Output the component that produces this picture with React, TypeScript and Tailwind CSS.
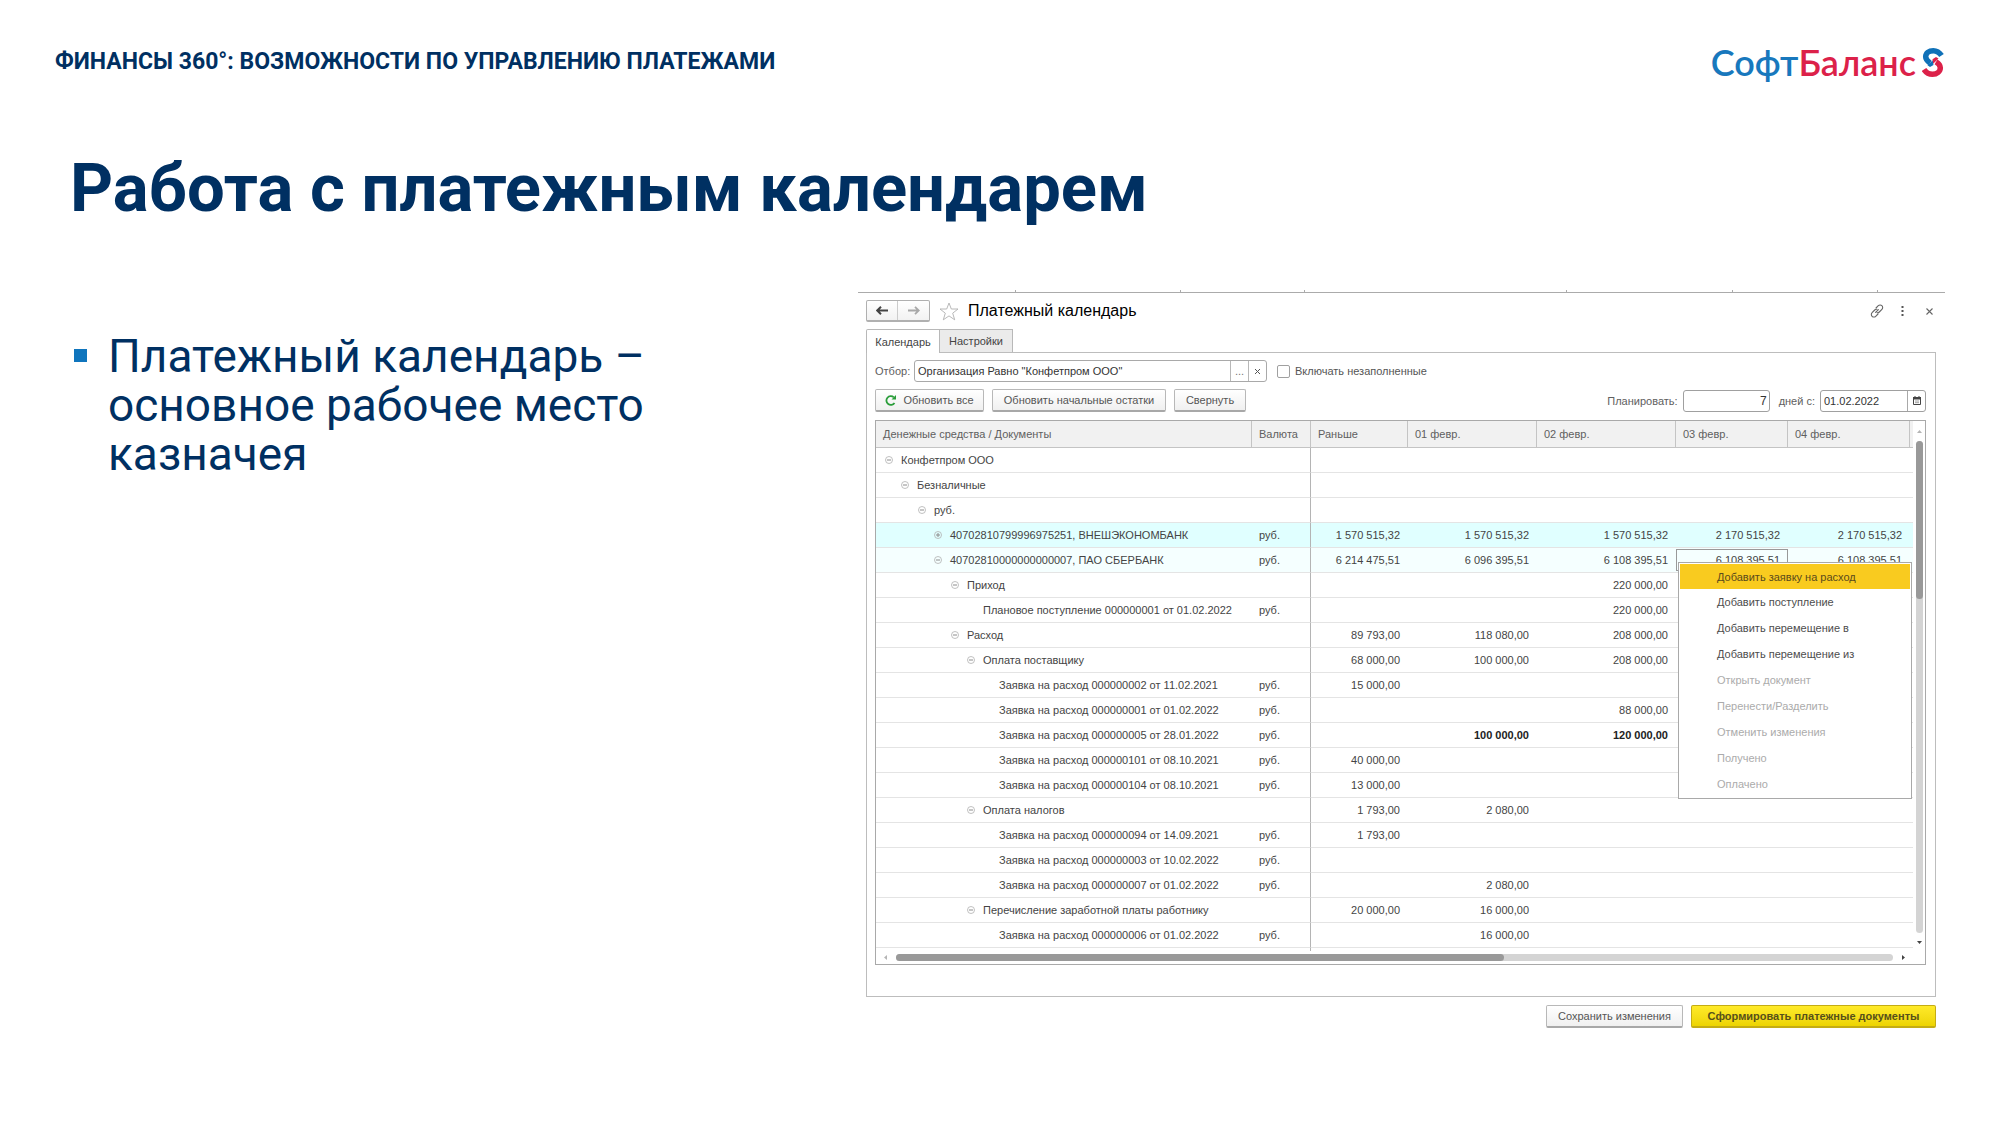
import React from "react";

type Row = {
  level: number;
  label: string;
  icon?: "minus" | "plus";
  currency?: boolean;
  values?: string[];
  tint?: "strong" | "light";
  bold?: boolean;
  menuAt?: number;
};

const rows: Row[] = [
  { level: 0, label: "Конфетпром ООО", icon: "minus" },
  { level: 1, label: "Безналичные", icon: "minus" },
  { level: 2, label: "руб.", icon: "minus" },
  {
    level: 3,
    label: "40702810799996975251, ВНЕШЭКОНОМБАНК",
    icon: "plus",
    currency: true,
    tint: "strong",
    values: ["1 570 515,32", "1 570 515,32", "1 570 515,32", "2 170 515,32", "2 170 515,32"],
  },
  {
    level: 3,
    label: "40702810000000000007, ПАО СБЕРБАНК",
    icon: "minus",
    currency: true,
    tint: "light",
    values: ["6 214 475,51", "6 096 395,51", "6 108 395,51", "6 108 395,51", "6 108 395,51"],
    menuAt: 3,
  },
  { level: 4, label: "Приход", icon: "minus", values: ["", "", "220 000,00"] },
  { level: 5, label: "Плановое поступление 000000001 от 01.02.2022", currency: true, values: ["", "", "220 000,00"] },
  { level: 4, label: "Расход", icon: "minus", values: ["89 793,00", "118 080,00", "208 000,00"] },
  { level: 5, label: "Оплата поставщику", icon: "minus", values: ["68 000,00", "100 000,00", "208 000,00"] },
  { level: 6, label: "Заявка на расход 000000002 от 11.02.2021", currency: true, values: ["15 000,00"] },
  { level: 6, label: "Заявка на расход 000000001 от 01.02.2022", currency: true, values: ["", "", "88 000,00"] },
  { level: 6, label: "Заявка на расход 000000005 от 28.01.2022", currency: true, values: ["", "100 000,00", "120 000,00"], bold: true },
  { level: 6, label: "Заявка на расход 000000101 от 08.10.2021", currency: true, values: ["40 000,00"] },
  { level: 6, label: "Заявка на расход 000000104 от 08.10.2021", currency: true, values: ["13 000,00"] },
  { level: 5, label: "Оплата налогов", icon: "minus", values: ["1 793,00", "2 080,00"] },
  { level: 6, label: "Заявка на расход 000000094 от 14.09.2021", currency: true, values: ["1 793,00"] },
  { level: 6, label: "Заявка на расход 000000003 от 10.02.2022", currency: true },
  { level: 6, label: "Заявка на расход 000000007 от 01.02.2022", currency: true, values: ["", "2 080,00"] },
  { level: 5, label: "Перечисление заработной платы работнику", icon: "minus", values: ["20 000,00", "16 000,00"] },
  { level: 6, label: "Заявка на расход 000000006 от 01.02.2022", currency: true, values: ["", "16 000,00"] },
];

const menuItems = [
  { label: "Добавить заявку на расход", enabled: true },
  { label: "Добавить поступление", enabled: true },
  { label: "Добавить перемещение в", enabled: true },
  { label: "Добавить перемещение из", enabled: true },
  { label: "Открыть документ", enabled: false },
  { label: "Перенести/Разделить", enabled: false },
  { label: "Отменить изменения", enabled: false },
  { label: "Получено", enabled: false },
  { label: "Оплачено", enabled: false },
];

const columns = ["Раньше", "01 февр.", "02 февр.", "03 февр.", "04 февр."];

const buttonClass =
  "flex h-[23px] items-center justify-center rounded-[2px] border border-[#b8b8b8] border-b-2 border-b-[#a8a8a8] bg-linear-to-b from-white to-[#f0f0f0] whitespace-nowrap text-[#555]";

function Toggle({ kind }: { kind: "minus" | "plus" }) {
  return (
    <svg className="size-2 shrink-0" viewBox="0 0 8 8" fill="none" stroke="#8c8c8c" aria-hidden="true">
      <circle cx="4" cy="4" r="3.5" stroke="#b0b0b0" strokeWidth="0.8" />
      <path d={kind === "minus" ? "M2 4h4" : "M2 4h4M4 2v4"} strokeWidth="1" />
    </svg>
  );
}

function Logo() {
  return (
    <a href="#" aria-label="СофтБаланс" className="flex items-center gap-[6px] font-['Lato',sans-serif] text-[36px] leading-9">
      <span className="font-semibold text-[#1878bd]">
        Софт<span className="text-[#dc2149]">Баланс</span>
      </span>
      <svg className="h-[31px] w-[22px]" viewBox="0 0 22 31" fill="none" strokeWidth="5.5" aria-hidden="true">
        <path d="M19.500 8.500C17.500 5.500 15 3.700 11.300 3.700 6.800 3.700 3.700 6.300 3.700 9.800c0 2.500 1.500 4.200 4.300 6.200" stroke="#1071b8" />
        <path d="M5.500 18.200l5.200-5 .8 4.800-3.500 2z" fill="#1071b8" />
        <path d="M2 22.500c2 3 4.800 4.800 8.500 4.800 4.500 0 7.800-2.800 7.800-6.500 0-2.600-1.500-4.300-4.300-6" stroke="#dc2149" />
        <path d="M16.500 11.500l-5.300 5.300-.7-4.500 3.500-2.300z" fill="#dc2149" />
      </svg>
    </a>
  );
}

function ContextMenu() {
  return (
    <div role="menu" className="absolute top-[14px] left-[2px] z-10 flex w-[234px] flex-col border border-[#a9a9a9] bg-white p-px text-left">
      {menuItems.map((item, i) => (
        <button
          key={item.label}
          type="button"
          role="menuitem"
          disabled={!item.enabled}
          className={
            i === 0
              ? "h-[25px] bg-[#f9cb1f] pl-[37px] text-left text-[#5a4a1c]"
              : item.enabled
                ? "h-[26px] pl-[37px] text-left text-[#4d4d4d]"
                : "h-[26px] pl-[37px] text-left text-[#ababab]"
          }
        >
          {item.label}
        </button>
      ))}
    </div>
  );
}

function CalendarTable() {
  return (
    <div className="border border-[#a9a9a9]">
      <div className="flex">
        <div className="min-w-0 flex-1">
          <table className="w-full table-fixed border-separate border-spacing-0">
            <colgroup>
              <col />
              <col className="w-[59px]" />
              <col className="w-[97px]" />
              <col className="w-[129px]" />
              <col className="w-[139px]" />
              <col className="w-[112px]" />
              <col className="w-[122px]" />
              <col className="w-[3px]" />
            </colgroup>
            <thead>
              <tr className="h-[27px] bg-[#f1f1f1] text-left text-[#606060]">
                <th className="border-r border-b border-[#c4c4c4] pl-[7px] font-normal">Денежные средства / Документы</th>
                <th className="border-r border-b border-[#c4c4c4] pl-[7px] font-normal">Валюта</th>
                {columns.map((c) => (
                  <th key={c} className="border-r border-b border-[#c4c4c4] pl-[7px] font-normal">
                    {c}
                  </th>
                ))}
                <th className="border-b border-[#c4c4c4]" />
              </tr>
            </thead>
            <tbody>
              {rows.map((row, r) => (
                <tr
                  key={r}
                  className={
                    row.tint === "strong"
                      ? "h-[25px] bg-[#e0ffff]"
                      : row.tint === "light"
                        ? "h-[25px] bg-[#f5ffff]"
                        : "h-[25px]"
                  }
                >
                  <td className="border-b border-[#e4e4e4]">
                    <div className="flex items-center gap-2 whitespace-nowrap" style={{ paddingLeft: 9 + Math.round(row.level * 16.4) }}>
                      {row.icon ? <Toggle kind={row.icon} /> : <span className="w-2" />}
                      {row.label}
                    </div>
                  </td>
                  <td className="border-r border-b border-r-[#b4b4b4] border-b-[#e4e4e4] pl-[7px]">{row.currency ? "руб." : ""}</td>
                  {columns.map((c, i) => (
                    <td
                      key={c}
                      className={
                        row.bold
                          ? "border-b border-[#e4e4e4] pr-2 text-right font-bold text-[#222]"
                          : "relative border-b border-[#e4e4e4] pr-2 text-right whitespace-nowrap"
                      }
                    >
                      {row.values?.[i] ?? ""}
                      {row.menuAt === i && (
                        <>
                          <span className="absolute inset-x-0 top-px h-[22px] border border-[#999]" />
                          <ContextMenu />
                        </>
                      )}
                    </td>
                  ))}
                  <td className="border-b border-[#e4e4e4]" />
                </tr>
              ))}
            </tbody>
          </table>
          <div className="flex h-[3px]">
            <span className="flex-1 border-r border-[#b4b4b4]" />
            <span className="w-[602px]" />
          </div>
        </div>
        <div className="flex w-3 flex-col items-center pt-[9px] pb-[7px]">
          <svg className="h-[3px] w-[5px]" viewBox="0 0 5 3" aria-hidden="true">
            <path d="M2.500 0L5 3H0z" fill="#b5b5b5" />
          </svg>
          <div className="mt-2 mb-2 w-[7px] flex-1 rounded-full bg-[#d4d4d4]">
            <div className="h-[158px] rounded-full bg-[#999]" />
          </div>
          <svg className="h-[3px] w-[5px]" viewBox="0 0 5 3" aria-hidden="true">
            <path d="M0 0h5L2.500 3z" fill="#444" />
          </svg>
        </div>
      </div>
      <div className="flex h-[13px] items-center pr-[20px] pl-2">
        <svg className="h-[5px] w-[3px]" viewBox="0 0 3 5" aria-hidden="true">
          <path d="M3 0v5L0 2.500z" fill="#b5b5b5" />
        </svg>
        <div className="mx-[9px] h-[7px] flex-1 rounded-full bg-[#d4d4d4]">
          <div className="h-[7px] w-[61%] rounded-full bg-[#999]" />
        </div>
        <svg className="h-[5px] w-[3px]" viewBox="0 0 3 5" aria-hidden="true">
          <path d="M0 0v5l3-2.500z" fill="#444" />
        </svg>
      </div>
    </div>
  );
}

function CalendarWindow() {
  return (
    <section className="font-['Liberation_Sans',Arial,sans-serif] text-[11px] leading-4 text-[#444]">
      <div className="grid h-[3px] grid-cols-[158fr_165fr_124fr_262fr_166fr_145fr_67fr] border-b border-[#ababab]">
        {[0, 1, 2, 3, 4, 5].map((i) => (
          <span key={i} className="border-r border-[#ababab]" />
        ))}
      </div>
      <div className="pr-[9px] pl-2">
        <div className="flex items-center pt-[7px]">
          <div className="flex h-[22px] rounded-[2px] border border-b-2 border-[#b0b0b0] bg-linear-to-b from-white to-[#f2f2f2]">
            <button type="button" aria-label="Назад" className="flex w-[31px] items-center justify-center border-r border-[#ccc]">
              <svg className="h-[9px] w-3" viewBox="0 0 12 9" fill="none" stroke="#444" strokeWidth="2" aria-hidden="true">
                <path d="M5 .8L1.200 4.500 5 8.200M1.400 4.500H12" />
              </svg>
            </button>
            <button type="button" aria-label="Вперед" className="flex w-[31px] items-center justify-center">
              <svg className="h-[9px] w-3" viewBox="0 0 12 9" fill="none" stroke="#a8a8a8" strokeWidth="1.800" aria-hidden="true">
                <path d="M7 .8l3.800 3.700L7 8.200M10.600 4.500H0" />
              </svg>
            </button>
          </div>
          <button type="button" aria-label="В избранное" className="ml-[9px]">
            <svg className="h-[19px] w-5" viewBox="0 0 20 19" fill="white" stroke="#b0b0b0" strokeWidth="0.900" aria-hidden="true">
              <path d="M10 1l2.300 6H19l-5.300 4.200 2 6.600L10 13.900l-5.700 3.900 2-6.600L1 7h6.700z" />
            </svg>
          </button>
          <h2 className="ml-[9px] text-[16px] leading-5 text-black">Платежный календарь</h2>
          <div className="ml-auto flex items-center text-[#666]">
            <button type="button" aria-label="Ссылка">
              <svg className="size-[14px]" viewBox="0 0 14 14" fill="none" stroke="#666" strokeWidth="1.100" strokeLinecap="round" aria-hidden="true">
                <path d="M6 4l2.300-2.300a2.500 2.500 0 0 1 3.600 0 2.500 2.500 0 0 1 0 3.600L9.300 8a2.500 2.500 0 0 1-2.200.7M8 10l-2.300 2.300a2.500 2.500 0 0 1-3.600 0 2.500 2.500 0 0 1 0-3.600L4.700 6a2.500 2.500 0 0 1 2.200-.7M5.600 8.400l2.800-2.800" />
              </svg>
            </button>
            <button type="button" aria-label="Еще" className="ml-[17px]">
              <svg className="h-[10px] w-[3px]" viewBox="0 0 3 10" fill="#555" aria-hidden="true">
                <path d="M.5 0h2v2h-2zM.5 4h2v2h-2zM.5 8h2v2h-2z" />
              </svg>
            </button>
            <button type="button" aria-label="Закрыть" className="mr-[3px] ml-[22px]">
              <svg className="size-[7px]" viewBox="0 0 7 7" fill="none" stroke="#666" strokeWidth="1.100" aria-hidden="true">
                <path d="M.5.5l6 6M6.500.5l-6 6" />
              </svg>
            </button>
          </div>
        </div>

        <div role="tablist" className="mt-[7px] flex">
          <button type="button" role="tab" aria-selected="true" className="z-10 -mb-px h-6 w-[74px] rounded-tl-[2px] border border-b-0 border-[#b8b8b8] bg-white">
            Календарь
          </button>
          <button type="button" role="tab" aria-selected="false" className="h-[23px] w-[73px] border-t border-r border-[#b8b8b8] bg-[#ebebeb]">
            Настройки
          </button>
        </div>

        <div className="border border-[#bdbdbd] pt-[7px] pr-[9px] pb-[31px] pl-2">
          <div className="flex items-center">
            <label htmlFor="filter" className="w-[39px] whitespace-nowrap text-[#606060]">
              Отбор:
            </label>
            <div className="flex h-[22px] w-[353px] rounded-[3px] border border-[#a9a9a9]">
              <input id="filter" type="text" defaultValue={'Организация Равно "Конфетпром ООО"'} className="min-w-0 flex-1 px-[3px] text-[#333] outline-none" />
              <button type="button" aria-label="Выбрать" className="w-[18px] border-l border-[#b8b8b8] text-[#777]">
                ...
              </button>
              <button type="button" aria-label="Очистить" className="flex w-[18px] items-center justify-center border-l border-[#b8b8b8]">
                <svg className="size-[5px]" viewBox="0 0 5 5" stroke="#555" strokeWidth="1" aria-hidden="true">
                  <path d="M0 0l5 5M5 0L0 5" />
                </svg>
              </button>
            </div>
            <input id="empty" type="checkbox" className="ml-[10px] size-[13px] appearance-none rounded-[2px] border border-[#a0a0a0] bg-white" />
            <label htmlFor="empty" className="ml-[5px] text-[#555]">
              Включать незаполненные
            </label>
          </div>

          <div className="mt-[7px] flex items-center">
            <button type="button" className={buttonClass + " w-[109px] gap-[6px]"}>
              <svg className="h-[11px] w-3" viewBox="0 0 12 11" fill="none" aria-hidden="true">
                <path d="M9.500 8A4.400 4.400 0 1 1 8.800 2.300" stroke="#2a9d3a" strokeWidth="1.800" />
                <path d="M11 0v4.600H6.500z" fill="#2a9d3a" />
              </svg>
              Обновить все
            </button>
            <button type="button" className={buttonClass + " ml-2 w-[174px]"}>
              Обновить начальные остатки
            </button>
            <button type="button" className={buttonClass + " ml-2 w-[72px]"}>
              Свернуть
            </button>
            <label htmlFor="days" className="ml-auto text-[#606060]">
              Планировать:
            </label>
            <input id="days" type="text" defaultValue="7" className="ml-[5px] h-[22px] w-[87px] rounded-[3px] border border-[#a0a0a0] px-[2px] text-right text-[12px] text-[#333]" />
            <label htmlFor="from" className="ml-[9px] text-[#606060]">
              дней с:
            </label>
            <div className="ml-[5px] flex h-[22px] w-[106px] rounded-[3px] border border-[#a0a0a0]">
              <input id="from" type="text" defaultValue="01.02.2022" className="min-w-0 flex-1 px-[3px] text-[#333] outline-none" />
              <button type="button" aria-label="Календарь" className="flex w-[18px] items-center justify-center border-l border-[#a9a9a9]">
                <svg className="h-[9px] w-2" viewBox="0 0 8 9" fill="none" aria-hidden="true">
                  <path d="M.5 1.500h7v7h-7z" stroke="#444" />
                  <path d="M0 1h8v2.500H0zM1.500 0h1v1h-1zM5.500 0h1v1h-1z" fill="#444" />
                  <path d="M2 5h4M2 6.700h4" stroke="#888" strokeWidth="0.800" />
                </svg>
              </button>
            </div>
          </div>

          <div className="mt-2">
            <CalendarTable />
          </div>
        </div>

        <div className="mt-2 flex justify-end gap-2">
          <button type="button" className={buttonClass + " w-[137px]"}>
            Сохранить изменения
          </button>
          <button
            type="button"
            className="flex h-[23px] w-[245px] items-center justify-center rounded-[2px] border border-b-2 border-[#c4ac14] bg-linear-to-b from-[#ffea28] to-[#edd400] font-bold whitespace-nowrap text-[#57501a]"
          >
            Сформировать платежные документы
          </button>
        </div>
      </div>
    </section>
  );
}

export default function App() {
  return (
    <div className="min-h-screen bg-white font-['Roboto',sans-serif] text-[#003062]">
      <header className="flex items-center justify-between pt-11 pr-14 pl-[55px]">
        <p className="text-[23px] leading-9 font-bold">ФИНАНСЫ 360°: ВОЗМОЖНОСТИ ПО УПРАВЛЕНИЮ ПЛАТЕЖАМИ</p>
        <Logo />
      </header>
      <h1 className="mt-[68px] pl-[70px] text-[67px] leading-[80px] font-bold">Работа с платежным календарем</h1>
      <main className="mt-[62px] grid grid-cols-[784fr_1087fr] pr-[55px] pl-[74px]">
        <ul className="pt-[42px]">
          <li className="flex max-w-[600px] gap-[21px] text-[46px] leading-[49px]">
            <span className="mt-[17px] size-[13px] shrink-0 bg-[#0f75bd]" />
            <span>Платежный календарь – основное рабочее место казначея</span>
          </li>
        </ul>
        <CalendarWindow />
      </main>
    </div>
  );
}
